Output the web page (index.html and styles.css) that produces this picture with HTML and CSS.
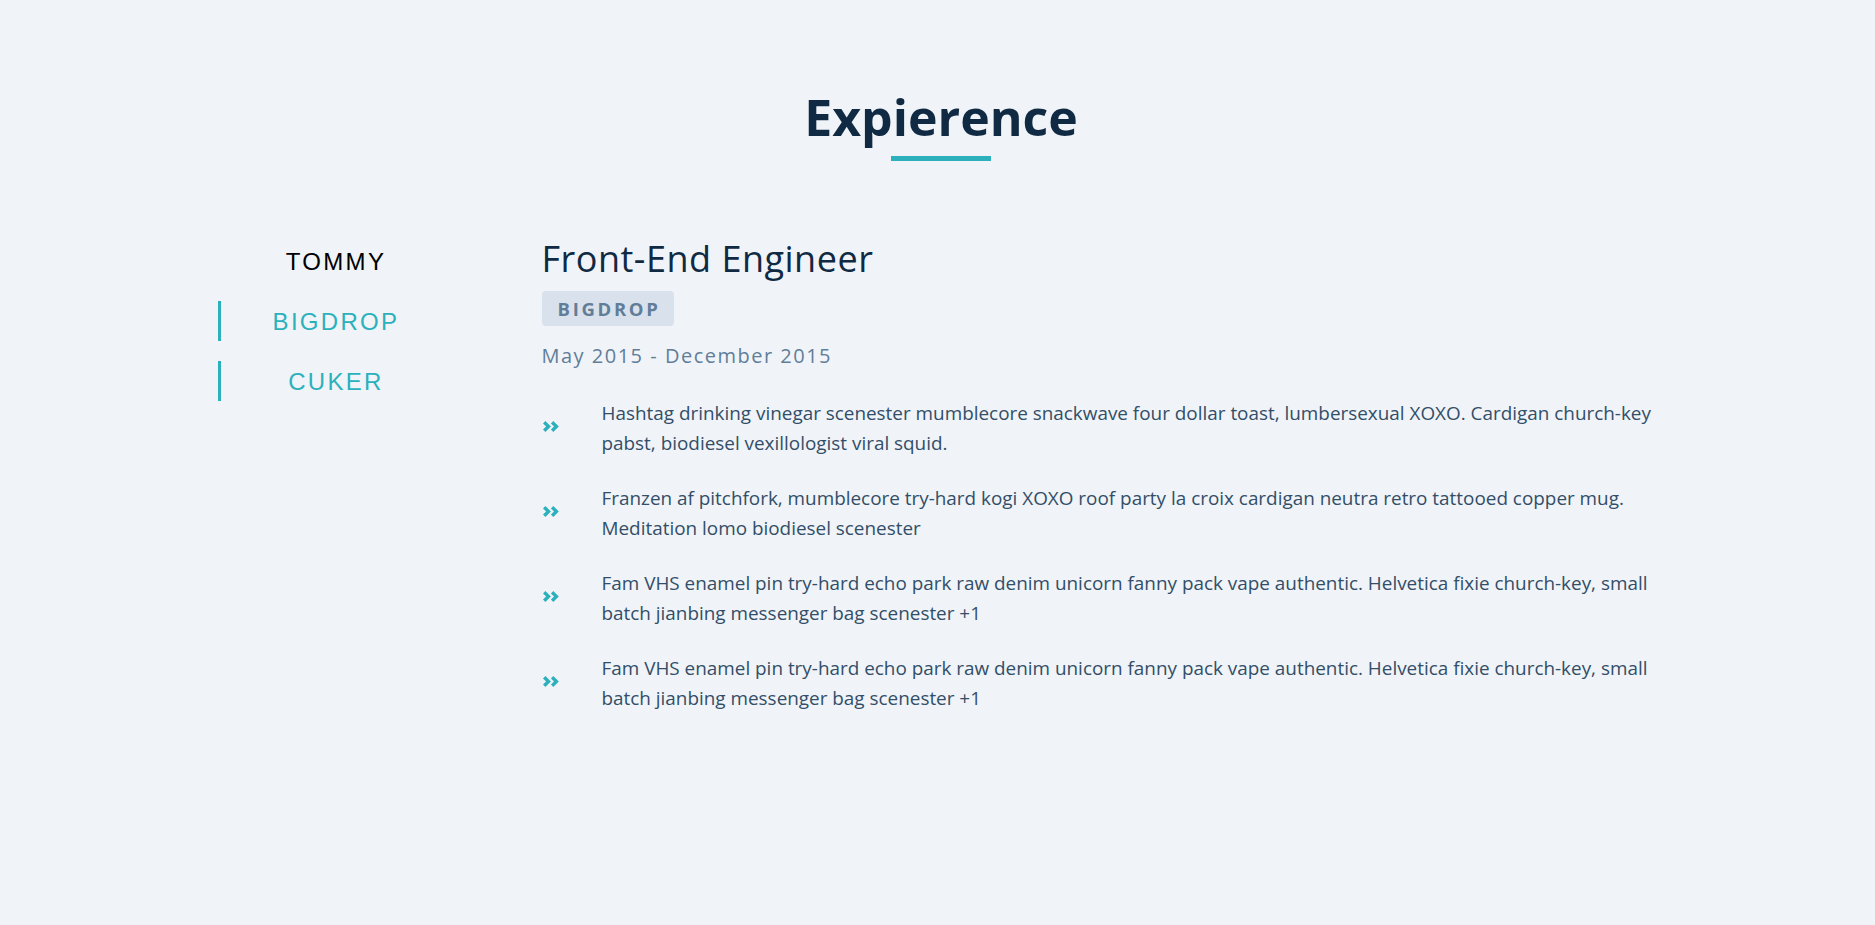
FILE: index.html
```html
<!DOCTYPE html>
<html lang="en">
<head>
<meta charset="utf-8">
<title>Expierence</title>
<link rel="stylesheet" href="styles.css">
</head>
<body>
<section class="experience">
  <header class="section-head">
    <h2 class="section-title">Expierence</h2>
    <div class="title-bar"></div>
  </header>
  <div class="jobs">
    <nav class="tabs">
      <button class="tab tab-active">TOMMY</button>
      <button class="tab">BIGDROP</button>
      <button class="tab">CUKER</button>
    </nav>
    <article class="job">
      <h3 class="job-title">Front-End Engineer</h3>
      <span class="company">BIGDROP</span>
      <p class="dates">May 2015 - December 2015</p>
      <ul class="duties">
        <li class="duty">
          <span class="bullet"><svg width="16" height="11" viewBox="0 0 16 11"><path d="M0 2.4 L2.4 0 L7.9 5.5 L2.4 11 L0 8.6 L3.1 5.5 Z M7.9 2.4 L10.3 0 L15.8 5.5 L10.3 11 L7.9 8.6 L11 5.5 Z"/></svg></span>
          <p class="duty-text">Hashtag drinking vinegar scenester mumblecore snackwave four dollar toast, lumbersexual XOXO. Cardigan church-key pabst, biodiesel vexillologist viral squid.</p>
        </li>
        <li class="duty">
          <span class="bullet"><svg width="16" height="11" viewBox="0 0 16 11"><path d="M0 2.4 L2.4 0 L7.9 5.5 L2.4 11 L0 8.6 L3.1 5.5 Z M7.9 2.4 L10.3 0 L15.8 5.5 L10.3 11 L7.9 8.6 L11 5.5 Z"/></svg></span>
          <p class="duty-text">Franzen af pitchfork, mumblecore try-hard kogi XOXO roof party la croix cardigan neutra retro tattooed copper mug. Meditation lomo biodiesel scenester</p>
        </li>
        <li class="duty">
          <span class="bullet"><svg width="16" height="11" viewBox="0 0 16 11"><path d="M0 2.4 L2.4 0 L7.9 5.5 L2.4 11 L0 8.6 L3.1 5.5 Z M7.9 2.4 L10.3 0 L15.8 5.5 L10.3 11 L7.9 8.6 L11 5.5 Z"/></svg></span>
          <p class="duty-text">Fam VHS enamel pin try-hard echo park raw denim unicorn fanny pack vape authentic. Helvetica fixie church-key, small batch jianbing messenger bag scenester +1</p>
        </li>
        <li class="duty">
          <span class="bullet"><svg width="16" height="11" viewBox="0 0 16 11"><path d="M0 2.4 L2.4 0 L7.9 5.5 L2.4 11 L0 8.6 L3.1 5.5 Z M7.9 2.4 L10.3 0 L15.8 5.5 L10.3 11 L7.9 8.6 L11 5.5 Z"/></svg></span>
          <p class="duty-text">Fam VHS enamel pin try-hard echo park raw denim unicorn fanny pack vape authentic. Helvetica fixie church-key, small batch jianbing messenger bag scenester +1</p>
        </li>
      </ul>
    </article>
  </div>
</section>
</body>
</html>
```

FILE: styles.css
```css
* {
  box-sizing: border-box;
}

html, body {
  margin: 0;
  padding: 0;
}

body {
  background: #f0f4f8;
  font-family: "Open Sans", "Noto Sans", sans-serif;
  color: #334e68;
  min-height: 925px;
}

.experience {
  padding-top: 85px;
}

.section-head {
  display: flex;
  flex-direction: column;
  align-items: center;
  padding-left: 7px;
}

.section-title {
  margin: 0;
  font-size: 50px;
  line-height: 64px;
  font-weight: 700;
  letter-spacing: 0;
  color: #102a43;
}

.title-bar {
  width: 100px;
  height: 5px;
  margin-top: 7px;
  background: #2cb1bc;
}

.jobs {
  width: 1440px;
  margin: 80px auto 0;
  display: grid;
  grid-template-columns: 234px 1fr;
  column-gap: 90px;
  align-items: start;
}

.tabs {
  display: flex;
  flex-direction: column;
  gap: 20px;
}

.tab {
  display: block;
  width: 100%;
  height: 40px;
  margin: 0;
  padding: 0;
  background: transparent;
  border: 0;
  border-left: 3px solid #2cb1bc;
  font-family: "Liberation Sans", Arial, sans-serif;
  font-size: 24px;
  line-height: 42px;
  letter-spacing: 2.3px;
  color: #2cb1bc;
  text-align: center;
  cursor: pointer;
}

.tab-active {
  border-left-color: transparent;
  color: #000000;
}

.job {
  min-width: 0;
}

.job-title {
  margin: 0;
  font-size: 36px;
  line-height: 36px;
  font-weight: 400;
  letter-spacing: 0.5px;
  color: #102a43;
}

.company {
  display: inline-block;
  margin-top: 14px;
  height: 35px;
  padding: 0 13px 0 16px;
  border-radius: 4px;
  background: #d9e2ec;
  color: #627d98;
  font-size: 18.5px;
  line-height: 35px;
  font-weight: 700;
  letter-spacing: 2.7px;
}

.dates {
  margin: 15px 0 0;
  font-size: 20px;
  line-height: 30px;
  letter-spacing: 1.5px;
  color: #627d98;
}

.duties {
  list-style: none;
  margin: 27px 0 0;
  padding: 0;
  display: flex;
  flex-direction: column;
  gap: 25px;
}

.duty {
  display: grid;
  grid-template-columns: 60px 1fr;
  align-items: center;
}

.bullet {
  display: flex;
  align-items: center;
  padding-left: 1px;
  margin-top: -4px;
}

.bullet svg {
  display: block;
  fill: #2cb1bc;
}

.duty-text {
  margin: 0;
  font-size: 18.9px;
  line-height: 30px;
  color: #334e68;
}
```
